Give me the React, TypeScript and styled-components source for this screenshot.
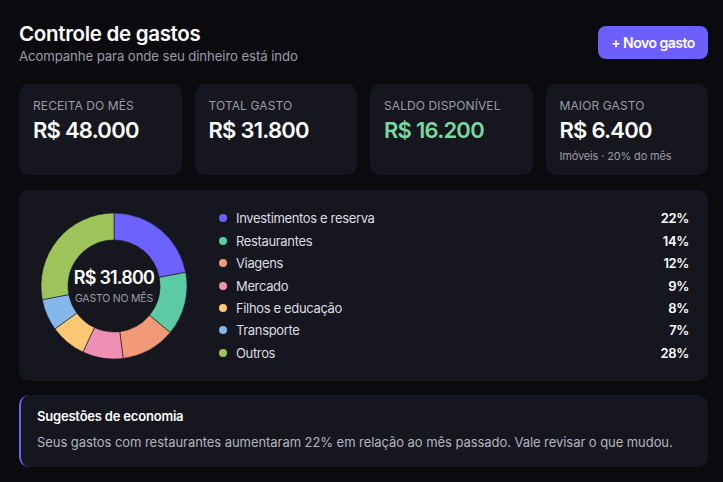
import React from "react";
import styled, { createGlobalStyle } from "styled-components";

const Global = createGlobalStyle`
  html, body { margin: 0; padding: 0; background: #0b0b0f; }
  body { font-family: Inter, "Noto Sans", sans-serif; color: #f4f4f7; -webkit-font-smoothing: antialiased; }
  * { box-sizing: border-box; }
`;

const Page = styled.div`
  padding: 22px 15px 16px 19px;
  display: flex;
  flex-direction: column;
`;

const Header = styled.header`
  display: flex;
  justify-content: space-between;
  align-items: flex-start;
`;

const Title = styled.h1`
  margin: 0;
  font-size: 20.5px;
  line-height: 24px;
  font-weight: 600;
  color: #ffffff;
  letter-spacing: -0.3px;
`;

const Subtitle = styled.p`
  margin: 1px 0 0;
  font-size: 13.2px;
  line-height: 18px;
  color: #9b9ca8;
  letter-spacing: -0.1px;
`;

const PrimaryButton = styled.button`
  margin-top: 4px;
  width: 110px;
  height: 33px;
  border: none;
  border-radius: 8px;
  background: #6c5ffc;
  color: #fff;
  font-family: inherit;
  font-size: 14px;
  font-weight: 600;
  letter-spacing: -0.5px;
  cursor: pointer;
`;

const StatGrid = styled.section`
  margin-top: 19px;
  display: grid;
  grid-template-columns: repeat(4, 1fr);
  gap: 13px;
`;

const Card = styled.div`
  background: #15161e;
  border-radius: 10px;
`;

const StatCard = styled(Card)`
  height: 91px;
  padding: 14px 14px;
  display: flex;
  flex-direction: column;
`;

const StatLabel = styled.div`
  font-size: 12px;
  line-height: 15px;
  color: #9b9ca8;
  text-transform: uppercase;
  letter-spacing: 0.1px;
`;

const StatValue = styled.div<{ $tone?: "green" }>`
  margin-top: 4px;
  font-size: 22px;
  line-height: 27px;
  font-weight: 600;
  color: ${(p) => (p.$tone === "green" ? "#7ad9a1" : "#ffffff")};
  letter-spacing: -0.75px;
`;

const StatSub = styled.div`
  margin-top: 5px;
  font-size: 11px;
  line-height: 14px;
  color: #9b9ca8;
  letter-spacing: -0.15px;
`;

const ChartCard = styled(Card)`
  margin-top: 15px;
  height: 191px;
  padding: 0 19px 0 22px;
  display: flex;
  align-items: center;
  gap: 32px;
`;

const DonutWrap = styled.div`
  position: relative;
  width: 146px;
  height: 146px;
  flex: none;
`;

const DonutCenter = styled.div`
  position: absolute;
  inset: 0;
  display: flex;
  flex-direction: column;
  align-items: center;
  justify-content: center;
`;

const CenterValue = styled.div`
  font-size: 18px;
  line-height: 22px;
  font-weight: 600;
  color: #fff;
  letter-spacing: -0.8px;
`;

const CenterLabel = styled.div`
  margin-top: 3px;
  font-size: 10.5px;
  line-height: 13px;
  color: #9b9ca8;
  text-transform: uppercase;
  letter-spacing: -0.2px;
`;

const Legend = styled.ul`
  list-style: none;
  margin: 0;
  padding: 0;
  flex: 1;
  display: flex;
  flex-direction: column;
  gap: 6.35px;
`;

const LegendRow = styled.li`
  display: flex;
  align-items: center;
  height: 16px;
  font-size: 13px;
  letter-spacing: -0.35px;
`;

const Dot = styled.span<{ $color: string }>`
  width: 8px;
  height: 8px;
  border-radius: 50%;
  background: ${(p) => p.$color};
  margin-right: 9px;
  flex: none;
`;

const LegendName = styled.span`
  color: #dcdce4;
`;

const LegendPct = styled.span`
  margin-left: auto;
  font-weight: 600;
  color: #ffffff;
`;

const TipCard = styled(Card)`
  margin-top: 14px;
  border-left: 2px solid #6c5ffc;
  padding: 13px 16px 16px 16px;
`;

const TipTitle = styled.div`
  font-size: 13px;
  line-height: 17px;
  font-weight: 600;
  color: #fff;
  letter-spacing: -0.2px;
`;

const TipText = styled.div`
  margin-top: 8px;
  font-size: 13px;
  line-height: 18px;
  color: #b4b5c0;
  letter-spacing: -0.06px;
`;

const segments = [
  { name: "Investimentos e reserva", pct: 22, color: "#6c63ff" },
  { name: "Restaurantes", pct: 14, color: "#5ccaa5" },
  { name: "Viagens", pct: 12, color: "#f09a78" },
  { name: "Mercado", pct: 9, color: "#ee90b3" },
  { name: "Filhos e educação", pct: 8, color: "#fcc874" },
  { name: "Transporte", pct: 7, color: "#85b8ea" },
  { name: "Outros", pct: 28, color: "#9cc45b" },
];

function arcPath(cx: number, cy: number, ro: number, ri: number, a0: number, a1: number) {
  const pt = (r: number, a: number) => [cx + r * Math.sin(a), cy - r * Math.cos(a)];
  const large = a1 - a0 > Math.PI ? 1 : 0;
  const [x0, y0] = pt(ro, a0);
  const [x1, y1] = pt(ro, a1);
  const [x2, y2] = pt(ri, a1);
  const [x3, y3] = pt(ri, a0);
  return `M${x0} ${y0} A${ro} ${ro} 0 ${large} 1 ${x1} ${y1} L${x2} ${y2} A${ri} ${ri} 0 ${large} 0 ${x3} ${y3} Z`;
}

function Donut() {
  let acc = 0;
  return (
    <svg width="146" height="146" viewBox="0 0 146 146">
      {segments.map((s) => {
        const a0 = (acc / 100) * Math.PI * 2;
        acc += s.pct;
        const a1 = (acc / 100) * Math.PI * 2;
        return (
          <path
            key={s.name}
            d={arcPath(73, 73, 73, 46, a0, a1)}
            fill={s.color}
            stroke="#15161e"
            strokeWidth={0.6}
          />
        );
      })}
    </svg>
  );
}

export default function App() {
  return (
    <>
      <Global />
      <Page>
        <Header>
          <div>
            <Title>Controle de gastos</Title>
            <Subtitle>Acompanhe para onde seu dinheiro está indo</Subtitle>
          </div>
          <PrimaryButton>+ Novo gasto</PrimaryButton>
        </Header>

        <StatGrid>
          <StatCard>
            <StatLabel>Receita do mês</StatLabel>
            <StatValue>R$ 48.000</StatValue>
          </StatCard>
          <StatCard>
            <StatLabel>Total gasto</StatLabel>
            <StatValue>R$ 31.800</StatValue>
          </StatCard>
          <StatCard>
            <StatLabel>Saldo disponível</StatLabel>
            <StatValue $tone="green">R$ 16.200</StatValue>
          </StatCard>
          <StatCard>
            <StatLabel>Maior gasto</StatLabel>
            <StatValue>R$ 6.400</StatValue>
            <StatSub>Imóveis · 20% do mês</StatSub>
          </StatCard>
        </StatGrid>

        <ChartCard>
          <DonutWrap>
            <Donut />
            <DonutCenter>
              <CenterValue>R$ 31.800</CenterValue>
              <CenterLabel>Gasto no mês</CenterLabel>
            </DonutCenter>
          </DonutWrap>
          <Legend>
            {segments.map((s) => (
              <LegendRow key={s.name}>
                <Dot $color={s.color} />
                <LegendName>{s.name}</LegendName>
                <LegendPct>{s.pct}%</LegendPct>
              </LegendRow>
            ))}
          </Legend>
        </ChartCard>

        <TipCard>
          <TipTitle>Sugestões de economia</TipTitle>
          <TipText>
            Seus gastos com restaurantes aumentaram 22% em relação ao mês passado. Vale revisar o que mudou.
          </TipText>
        </TipCard>
      </Page>
    </>
  );
}
